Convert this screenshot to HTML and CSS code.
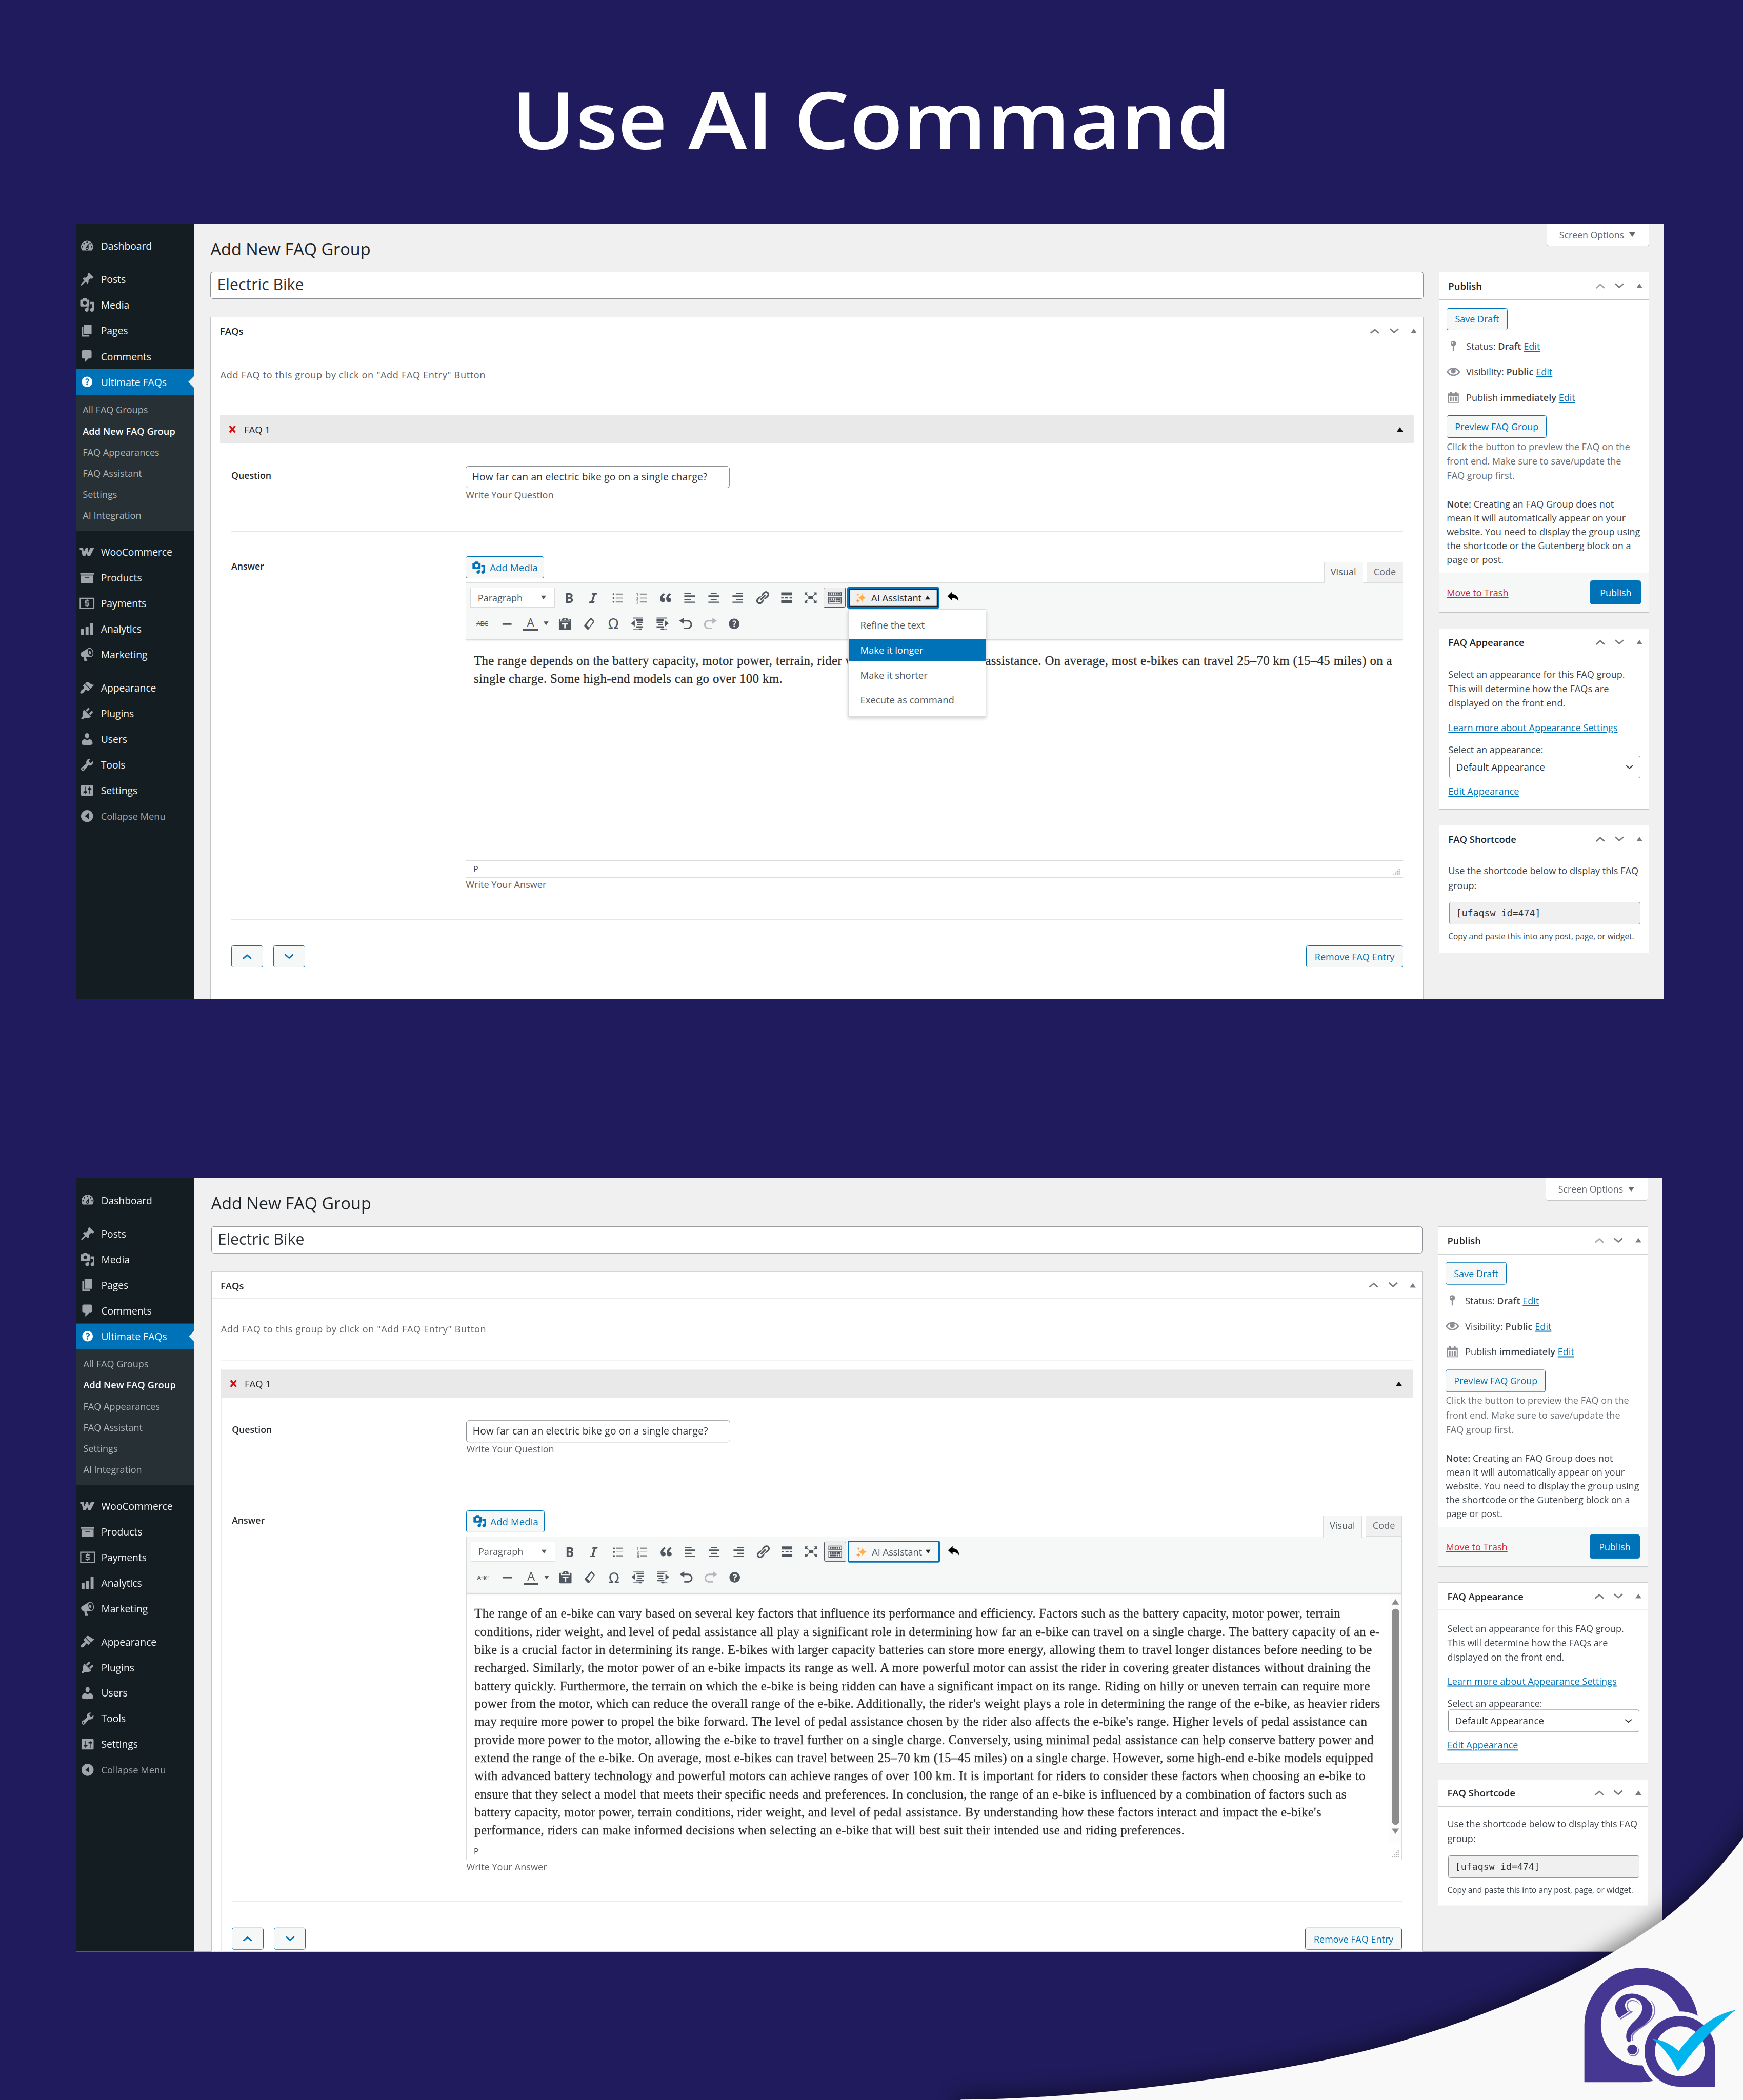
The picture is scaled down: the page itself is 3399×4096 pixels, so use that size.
FILE: index.html
```html
<!DOCTYPE html>
<html lang="en">
<head>
<meta charset="utf-8">
<title>Use AI Command</title>
<link rel="stylesheet" href="styles.css">
</head>
<body>
<svg class="sprite" aria-hidden="true">
  <symbol id="dashboard" viewBox="0 0 20 20"><path d="M3.76 16h12.48c1.1-1.37 1.76-3.11 1.76-5 0-4.42-3.58-8-8-8s-8 3.58-8 8c0 1.89.66 3.63 1.76 5zM10 4c.55 0 1 .45 1 1s-.45 1-1 1-1-.45-1-1 .45-1 1-1zM6 6c.55 0 1 .45 1 1s-.45 1-1 1-1-.45-1-1 .45-1 1-1zm8 0c.55 0 1 .45 1 1s-.45 1-1 1-1-.45-1-1 .45-1 1-1zm-5.37 5.55L12 7v6c0 1.1-.9 2-2 2s-2-.9-2-2c0-.57.24-1.08.63-1.45zM4 10c.55 0 1 .45 1 1s-.45 1-1 1-1-.45-1-1 .45-1 1-1zm12 0c.55 0 1 .45 1 1s-.45 1-1 1-1-.45-1-1 .45-1 1-1zm-5 3c0-.55-.45-1-1-1s-1 .45-1 1 .45 1 1 1 1-.45 1-1z"/></symbol>
  <symbol id="post" viewBox="0 0 20 20"><path d="M10.44 3.02l1.82-1.82 6.36 6.35-1.83 1.82c-1.05-.68-2.48-.57-3.41.36l-.75.75c-.92.93-1.04 2.35-.35 3.41l-1.83 1.82-2.41-2.41-2.8 2.79c-.42.42-3.38 2.71-3.8 2.29s1.86-3.39 2.28-3.81l2.79-2.79L4.1 9.36l1.83-1.82c1.05.69 2.48.57 3.4-.36l.75-.75c.93-.92 1.05-2.35.36-3.41z"/></symbol>
  <symbol id="media" viewBox="0 0 20 20"><path d="M13 11V4c0-.55-.45-1-1-1h-1.67L9 1H5L3.67 3H2c-.55 0-1 .45-1 1v7c0 .55.45 1 1 1h10c.55 0 1-.45 1-1zM7 4.5c1.38 0 2.5 1.12 2.5 2.5S8.38 9.5 7 9.5 4.500 8.38 4.500 7 5.620 4.500 7 4.500zM14 6h5v10.500c0 1.380-1.120 2.500-2.500 2.500S14 17.880 14 16.500s1.120-2.500 2.500-2.500c.17 0 .34.02.5.05V9h-3V6zm-4 8.050V13h2v3.500c0 1.380-1.120 2.500-2.500 2.500S7 17.880 7 16.500 8.120 14 9.500 14c.17 0 .34.02.5.05z"/></symbol>
  <symbol id="page" viewBox="0 0 20 20"><path d="M6 15V2h10v13H6zm-1 1h8v2H3V5h2v11z"/></symbol>
  <symbol id="comments" viewBox="0 0 20 20"><path d="M5 2h9c1.1 0 2 .9 2 2v7c0 1.1-.9 2-2 2h-2l-5 5v-5H5c-1.1 0-2-.9-2-2V4c0-1.1.9-2 2-2z"/></symbol>
  <symbol id="help" viewBox="0 0 20 20"><path d="M17 10c0-3.87-3.14-7-7-7-3.87 0-7 3.13-7 7s3.13 7 7 7c3.86 0 7-3.13 7-7zm-6.3 1.480H9.140v-.43c0-.38.08-.7.24-.98s.46-.57.88-.89c.41-.29.68-.53.81-.71.14-.18.2-.39.2-.62 0-.25-.09-.44-.28-.58-.19-.13-.45-.19-.79-.19-.58 0-1.250.19-2 .57l-.64-1.280c.87-.49 1.800-.74 2.770-.74.81 0 1.450.2 1.920.58.48.39.71.91.71 1.550 0 .43-.09.8-.29 1.110-.19.32-.57.67-1.110 1.060-.38.28-.61.49-.71.63-.1.15-.15.34-.15.57v.35zm-1.470 2.740c-.18-.17-.27-.42-.27-.73 0-.33.08-.58.26-.75s.43-.25.77-.25c.32 0 .57.09.75.26s.27.42.27.74c0 .3-.09.55-.27.72-.18.18-.43.27-.75.27-.33 0-.58-.09-.76-.26z"/></symbol>
  <symbol id="woo" viewBox="0 0 20 20"><path d="M.3 4.700h4.500l.7 5.400 2.700-5.400h2.700l.7 5.400 2.700-5.400h5l-5.300 10.800h-3.200l-1.200-4.200-2.200 4.200H4.200L2.400 7.100H.3z"/></symbol>
  <symbol id="archive" viewBox="0 0 20 20"><path d="M19 4v2H1V4h18zM2 7h16v10H2V7zm11 3V9H7v1h6z"/></symbol>
  <symbol id="payments" viewBox="0 0 20 20"><path fill-rule="evenodd" d="M.2 2.500h19.600v15H.2zM1.700 4v12h16.600V4z"/><path d="M9.300 5h1.500v1.200h1.900v1.500H9.200v1.500h3.500v4.200h-1.900v1.300H9.300v-1.300H7.300v-1.500h3.900v-1.300H7.400V6.200h1.900z"/></symbol>
  <symbol id="chart" viewBox="0 0 20 20"><path d="M18 18V2h-4v16h4zm-6 0V7H8v11h4zm-6 0v-8H2v8h4z"/></symbol>
  <symbol id="megaphone" viewBox="0 0 20 20"><path d="M18.150 5.940c.46 1.620.38 3.220-.02 4.480-.42 1.280-1.260 2.180-2.300 2.480-.16.06-.26.06-.4.06-.06.02-.12.02-.18.02-.06.02-.14.02-.22.02h-6.800l2.220 5.500c.02.14-.06.26-.14.34-.08.1-.24.16-.34.16H6.950c-.1 0-.26-.06-.34-.16-.08-.08-.16-.2-.14-.34l-1-5.500H4.250l-.02-.02c-.5.06-1.080-.18-1.540-.62s-.88-1.080-1.060-1.880c-.24-.8-.2-1.560-.02-2.200.18-.62.58-1.080 1.060-1.300l.02-.02 9-5.400c.1-.06.18-.1.24-.16.06-.04.14-.08.24-.12.16-.08.28-.12.5-.18 1.040-.3 2.240.1 3.220.98s1.840 2.240 2.260 3.860zm-2.580 5.980h-.02c.4-.1.74-.34 1.040-.7.58-.7.86-1.760.86-3.040 0-.64-.1-1.300-.28-1.980-.34-1.360-1.020-2.500-1.780-3.240s-1.680-1.100-2.460-.88c-.82.22-1.400.96-1.700 2-.32 1.040-.28 2.360.06 3.720.38 1.360 1 2.500 1.800 3.240.78.74 1.620 1.100 2.480.88zm-2.540-7.080c.22-.04.42-.02.62.04.38.16.76.48 1.020 1s.42 1.200.42 1.780c0 .3-.04.56-.12.8-.18.48-.44.84-.86.94-.34.1-.8-.06-1.140-.4s-.64-.86-.78-1.500c-.18-.62-.12-1.240.02-1.720s.48-.84.82-.94z"/></symbol>
  <symbol id="appearance" viewBox="0 0 20 20"><path d="M14.480 11.060L7.410 3.990l1.500-1.500c.5-.56 2.300-.47 3.510.32 1.210.8 1.430 1.280 2.910 2.100 1.180.64 2.450 1.260 4.450.85zm-.71.71L6.700 4.700 4.930 6.470c-.39.39-.39 1.020 0 1.410l1.060 1.060c.39.39.39 1.030 0 1.420-.6.6-1.430 1.110-2.210 1.690-.35.26-.7.53-1.010.84C1.430 14.230.4 16.080 1.400 17.070c.99 1 2.840-.03 4.180-1.360.31-.31.58-.66.85-1.020.57-.78 1.080-1.610 1.690-2.210.39-.39 1.020-.39 1.410 0l1.060 1.060c.39.39 1.020.39 1.410 0z"/></symbol>
  <symbol id="plugins" viewBox="0 0 20 20"><path d="M13.110 4.360L9.870 7.600 8 5.730l3.240-3.240c.35-.34 1.050-.2 1.560.32.52.51.66 1.210.31 1.550zm-8 1.770l.91-1.120 9.010 9.010-1.190.84c-.71.71-2.630 1.160-3.820 1.160H6.140L4.900 17.260c-.59.59-1.540.59-2.120 0-.59-.58-.59-1.530 0-2.120l1.240-1.240v-3.880c0-1.130.4-3.190 1.090-3.890zm7.260 3.970l3.240-3.240c.34-.35 1.040-.21 1.550.31.52.51.66 1.210.31 1.550l-3.240 3.250z"/></symbol>
  <symbol id="users" viewBox="0 0 20 20"><path d="M10 9.250c-2.270 0-2.730-3.440-2.730-3.440C7 4.020 7.820 2 9.970 2c2.160 0 2.980 2.020 2.710 3.810 0 0-.41 3.440-2.680 3.440zm0 2.570L12.720 10c2.390 0 4.520 2.330 4.520 4.530v2.490s-3.650 1.130-7.240 1.130c-3.650 0-7.240-1.130-7.240-1.130v-2.490c0-2.250 1.940-4.480 4.470-4.480z"/></symbol>
  <symbol id="tools" viewBox="0 0 20 20"><path d="M16.680 9.770c-1.340 1.340-3.300 1.670-4.950.99l-5.410 6.520c-.99.99-2.590.99-3.580 0s-.99-2.590 0-3.570l6.520-5.420c-.68-1.650-.35-3.610.99-4.950 1.280-1.280 3.120-1.620 4.720-1.060l-2.890 2.890 2.820 2.820 2.860-2.870c.53 1.580.18 3.390-1.080 4.650zM3.810 16.210c.4.39 1.040.39 1.430 0 .4-.4.4-1.040 0-1.430-.39-.4-1.030-.4-1.430 0-.39.39-.39 1.030 0 1.430z"/></symbol>
  <symbol id="settings" viewBox="0 0 20 20"><path d="M18 16V4c0-.55-.45-1-1-1H3c-.55 0-1 .45-1 1v12c0 .55.45 1 1 1h14c.55 0 1-.45 1-1zM8 11h1c.55 0 1 .45 1 1s-.45 1-1 1H8v1.500c0 .28-.22.5-.5.5s-.5-.22-.5-.5V13H6c-.55 0-1-.45-1-1s.45-1 1-1h1V5.500c0-.28.22-.5.5-.5s.5.22.5.5V11zm5-2h-1c-.55 0-1-.45-1-1s.45-1 1-1h1V5.500c0-.28.22-.5.5-.5s.5.22.5.5V7h1c.55 0 1 .45 1 1s-.45 1-1 1h-1v5.500c0 .28-.22.5-.5.5s-.5-.22-.5-.5V9z"/></symbol>
  <symbol id="collapse" viewBox="0 0 20 20"><path fill-rule="evenodd" d="M10 2a8 8 0 1 0 0 16 8 8 0 0 0 0-16zm2.200 4v8L7 10z"/></symbol>
  <symbol id="bold" viewBox="0 0 20 20"><path d="M6 4v13h4.540c1.370 0 2.460-.33 3.260-1 .8-.66 1.200-1.580 1.200-2.770 0-.84-.17-1.510-.51-2.010s-.9-.85-1.670-1.030v-.09c.57-.1 1.020-.4 1.360-.9s.51-1.130.51-1.910c0-1.140-.39-1.980-1.170-2.500C12.750 4.260 11.500 4 9.780 4H6zm2.570 5.150V6.260h1.360c.73 0 1.270.11 1.610.32.34.22.51.58.51 1.070 0 .54-.16.92-.47 1.150s-.82.35-1.510.35h-1.500zm0 2.190h1.600c1.440 0 2.160.53 2.160 1.610 0 .6-.17 1.050-.51 1.340s-.86.43-1.570.43H8.570v-3.380z"/></symbol>
  <symbol id="italic" viewBox="0 0 20 20"><path d="M14.780 6h-2.130l-2.800 9h2.120l-.62 2H4.600l.62-2h2.140l2.800-9H8.030l.62-2h6.750z"/></symbol>
  <symbol id="ul" viewBox="0 0 20 20"><path opacity=".6" d="M8 4.500h9v2H8zM8 14.500h9v2H8z"/><path d="M8 10h9v1H8z"/><circle cx="5" cy="5.500" r="1.200"/><circle cx="5" cy="10.500" r="1.200"/><circle cx="5" cy="15.500" r="1.200"/></symbol>
  <symbol id="ol" viewBox="0 0 20 20"><path opacity=".6" d="M8 4.500h9v2H8zM8 14.500h9v2H8z"/><path d="M8 10h9v1H8z"/><path opacity=".65" d="M4.200 3.500h1.100v4H4.200zM3.400 4.200h1v.8h-1zM3.500 9h2.600v2L4.800 12h1.300v.8H3.500v-1l1.500-1.400v-.6H3.500zM3.500 14h2.600v4H3.500v-.8h1.600v-.8H4v-.8h1.100v-.8H3.500z"/></symbol>
  <symbol id="quote" viewBox="0 0 20 20"><path d="M9.490 13.220c0-.74-.2-1.380-.61-1.900-.62-.78-1.830-.88-2.530-.72-.29-1.650 1.110-3.750 2.920-4.650L7.880 4c-2.730 1.300-5.420 4.280-4.960 8.050C3.210 14.430 4.590 16 6.540 16c.85 0 1.560-.25 2.120-.75s.83-1.180.83-2.030zm8.050 0c0-.74-.2-1.380-.61-1.900-.63-.78-1.830-.88-2.530-.72-.29-1.650 1.110-3.750 2.920-4.650L15.930 4c-2.730 1.300-5.410 4.280-4.950 8.050.29 2.380 1.660 3.950 3.610 3.950.85 0 1.560-.25 2.120-.75s.83-1.180.83-2.030z"/></symbol>
  <symbol id="left" viewBox="0 0 20 20"><path d="M3 3.500h9v1.600H3zM3 7h14v2H3zM3 11.500h9v2H3zM3 15.200h14v1.600H3z"/></symbol>
  <symbol id="center" viewBox="0 0 20 20"><path d="M6 3.500h8v1.600H6zM3 7h14v2H3zM6 11.500h8v2H6zM3 15.200h14v1.600H3z"/></symbol>
  <symbol id="right" viewBox="0 0 20 20"><path d="M8 3.500h9v1.600H8zM3 7h14v2H3zM8 11.500h9v2H8zM3 15.200h14v1.600H3z"/></symbol>
  <symbol id="link" viewBox="0 0 20 20"><path d="M17.740 2.760c1.680 1.690 1.680 4.410 0 6.100l-1.530 1.520c-1.120 1.120-2.700 1.470-4.140 1.090l2.620-2.610.76-.77.76-.76c.84-.84.84-2.200 0-3.040-.84-.85-2.200-.85-3.040 0l-.77.76-3.380 3.380c-.37-1.440-.02-3.020 1.100-4.140l1.520-1.530c1.690-1.680 4.420-1.680 6.100 0zM8.590 13.430l5.340-5.340c.42-.42.42-1.100 0-1.520-.44-.43-1.130-.39-1.530 0l-5.330 5.340c-.42.42-.42 1.100 0 1.520.44.43 1.130.39 1.520 0zm-.76 2.290l4.140-4.150c.38 1.440.03 3.020-1.090 4.140l-1.520 1.530c-1.690 1.680-4.410 1.680-6.100 0-1.680-1.680-1.680-4.420 0-6.100l1.530-1.520c1.120-1.120 2.700-1.470 4.140-1.100l-4.140 4.150c-.85.84-.85 2.200 0 3.050.84.84 2.200.84 3.040 0z"/></symbol>
  <symbol id="more" viewBox="0 0 20 20"><path d="M17 7V3H3v4h14zM6 11V9H3v2h3zm6 0V9H8v2h4zm5 0V9h-3v2h3zm0 6v-4H3v4h14z"/></symbol>
  <symbol id="expand" viewBox="0 0 20 20"><path d="M7 8h6v4H7zm-5 5v4h4l-1.200-1.200L7 12l-3.800 2.200M14 17h4v-4l-1.200 1.200L13 12l2.200 3.800M14 3l1.300 1.300L13 8l3.800-2.200L18 7V3M6 3H2v4l1.200-1.200L7 8 4.700 4.300"/></symbol>
  <symbol id="sink" viewBox="0 0 20 20"><path d="M19 2v6H1V2h18zm-1 5V3H2v4h16zM5 4v2H3V4h2zm3 0v2H6V4h2zm3 0v2H9V4h2zm3 0v2h-2V4h2zm3 0v2h-2V4h2zm2 5v9H1V9h18zm-1 8v-7H2v7h16zM5 11v2H3v-2h2zm3 0v2H6v-2h2zm3 0v2H9v-2h2zm6 0v2h-5v-2h5zm-6 3v2H3v-2h8zm3 0v2h-2v-2h2zm3 0v2h-2v-2h2z"/></symbol>
  <symbol id="sparkle" viewBox="0 0 20 20"><path fill="#ffb04a" d="M12 2c1 5 2.200 7 7.500 8.500-5.300 1.500-6.500 3.500-7.500 8.500-1-5-2.200-7-7.500-8.500C9.800 9 11 7 12 2z"/><path fill="#ff9563" d="M4.500 11.800c.5 2.300 1.100 3.400 3.800 4.200-2.700.8-3.300 1.900-3.800 4.200-.5-2.300-1.100-3.400-3.800-4.200 2.700-.8 3.300-1.900 3.800-4.200z"/><path fill="#ffb861" d="M4.800 1.500c.4 2 1 2.800 3 3.400-2 .6-2.600 1.400-3 3.400-.4-2-1-2.800-3-3.400 2-.6 2.600-1.400 3-3.400z"/></symbol>
  <symbol id="reply" viewBox="0 0 20 20"><path d="M8.500 2.500v3.800c6.500.1 9.800 4.200 9.800 10.700-2.200-3.600-4.800-4.900-9.800-4.900v4L1.500 9.300z"/></symbol>
  <symbol id="hline" viewBox="0 0 20 20"><path d="M4 9h12v2.400H4z"/></symbol>
  <symbol id="paste" viewBox="0 0 20 20"><path d="M12.380 2L15 5v1H5V5l2.640-3h4.740zM10 5c.55 0 1-.44 1-1 0-.55-.45-1-1-1s-1 .45-1 1c0 .56.45 1 1 1zm5.450-1H17c.55 0 1 .45 1 1v12c0 .56-.45 1-1 1H3c-.55 0-1-.44-1-1V5c0-.55.45-1 1-1h1.550L4 4.630V7h12V4.630zM14 11V9H6v2h3v5h2v-5h3z"/></symbol>
  <symbol id="eraser" viewBox="0 0 20 20"><path fill-rule="evenodd" d="M11.600 2.600c.5-.6 1.300-.6 1.800 0l3 3.400c.5.6.5 1.400.1 2L9.800 17c-.7.9-1.700.9-2.400.1L4 13.600c-.6-.7-.6-1.500-.1-2.200zM12.500 4L6.600 11.500l3.400 3.600L15.300 7z"/></symbol>
  <symbol id="outdent" viewBox="0 0 20 20"><path opacity=".6" d="M3.500 1.600H17v1.600H3.500zM3.500 16.400H12v1.300H3.500z"/><path d="M7.500 4H17v2.200H7.500zM9 7.200h8v2H9zM9 10.300h6v2H9zM7.500 13.300H17v2H7.500zM11.500 16.200h3.500v1.800h-3.500zM6 5.500v8L1 9.500z"/></symbol>
  <symbol id="indent" viewBox="0 0 20 20"><path opacity=".6" d="M3 1.600h13.500v1.600H3zM8 16.400h8.500v1.300H8z"/><path d="M3 4h9.500v2.200H3zM3 7.200h8v2H3zM5 10.300h6v2H5zM3 13.300h9.500v2H3zM9 16.200h3.500v1.800H9zM14 5.500v8l5-4z"/></symbol>
  <symbol id="undo" viewBox="0 0 20 20"><path d="M12 5H7V2L1 6l6 4V7h5c2.200 0 4 1.800 4 4s-1.800 4-4 4H7v2h5c3.300 0 6-2.700 6-6s-2.700-6-6-6z"/></symbol>
  <symbol id="redo" viewBox="0 0 20 20"><path d="M8 5h5V2l6 4-6 4V7H8c-2.200 0-4 1.800-4 4s1.800 4 4 4h5v2H8c-3.300 0-6-2.700-6-6s2.700-6 6-6z"/></symbol>
  <symbol id="pin" viewBox="0 0 20 20"><path d="M14 6c0 1.860-1.280 3.410-3 3.860V16c0 1-2 2-2 2V9.860c-1.720-.45-3-2-3-3.860 0-2.210 1.790-4 4-4s4 1.790 4 4zM8 5c0 .55.45 1 1 1s1-.45 1-1-.45-1-1-1-1 .45-1 1z"/></symbol>
  <symbol id="eye" viewBox="0 0 20 20"><path d="M19.700 9.400C17.700 6 14 3.900 10 3.900S2.300 6 .3 9.400L0 10l.3.6c2 3.400 5.700 5.500 9.700 5.500s7.700-2.100 9.700-5.500l.3-.6zM10 14.100c-3.100 0-6-1.600-7.700-4.100C3.600 8 5.700 6.600 8 6.100c-.9.6-1.500 1.700-1.500 2.900 0 1.900 1.600 3.500 3.500 3.500s3.500-1.600 3.500-3.500c0-1.200-.6-2.300-1.500-2.900 2.300.5 4.400 1.900 5.700 3.900-1.700 2.500-4.600 4.100-7.700 4.100z"/><circle cx="10" cy="9" r="2.600"/></symbol>
  <symbol id="calendar" viewBox="0 0 20 20"><path fill-rule="evenodd" d="M15 4h3v14H2V4h3V3c0-.83.67-1.500 1.500-1.500S8 2.170 8 3v1h4V3c0-.83.67-1.500 1.500-1.500S15 2.170 15 3v1zM3.500 8v8.700h13V8zM5 8.800h2.300v7H5zM8.900 8.800h2.300v7H8.900zM12.700 8.800H15v7h-2.300z"/></symbol>
  <symbol id="up" viewBox="0 0 28 16"><path d="M2.500 14L14 4l11.500 10" fill="none" stroke="currentColor" stroke-width="4"/></symbol>
  <symbol id="down" viewBox="0 0 28 16"><path d="M2.500 2L14 12 25.500 2" fill="none" stroke="currentColor" stroke-width="4"/></symbol>
  <symbol id="tri-up" viewBox="0 0 16 12"><path d="M8 0l8 12H0z"/></symbol>
  <symbol id="tri-down" viewBox="0 0 16 12"><path d="M8 12L0 0h16z"/></symbol>
  <symbol id="grip" viewBox="0 0 18 18"><path d="M14 0h3v3h-3zM14 5h3v3h-3zM9 5h3v3H9zM14 10h3v3h-3zM9 10h3v3H9zM4 10h3v3H4zM14 15h3v3h-3zM9 15h3v3H9zM4 15h3v3H4zM0 15h2v3H0z"/></symbol>
</svg>

<header class="banner">
  <svg viewBox="0 0 4500 577" role="img" aria-label="Use AI Command">
    <g class="banner-title">
      <text x="1321" y="385" textLength="402" lengthAdjust="spacingAndGlyphs">Use</text>
      <text x="1777" y="385" textLength="221" lengthAdjust="spacingAndGlyphs">AI</text>
      <text x="2050" y="385" textLength="1129" lengthAdjust="spacingAndGlyphs">Command</text>
    </g>
  </svg>
</header>

<section class="panel">
  <nav class="menu">
    <a class="item"><svg><use href="#dashboard"/></svg>Dashboard</a>
    <a class="item gap"><svg><use href="#post"/></svg>Posts</a>
    <a class="item"><svg><use href="#media"/></svg>Media</a>
    <a class="item"><svg><use href="#page"/></svg>Pages</a>
    <a class="item"><svg><use href="#comments"/></svg>Comments</a>
    <a class="item current"><svg><use href="#help"/></svg>Ultimate FAQs</a>
    <div class="submenu">
      <a>All FAQ Groups</a><a class="active">Add New FAQ Group</a><a>FAQ Appearances</a><a>FAQ Assistant</a><a>Settings</a><a>AI Integration</a>
    </div>
    <a class="item gap"><svg><use href="#woo"/></svg>WooCommerce</a>
    <a class="item"><svg><use href="#archive"/></svg>Products</a>
    <a class="item"><svg><use href="#payments"/></svg>Payments</a>
    <a class="item"><svg><use href="#chart"/></svg>Analytics</a>
    <a class="item"><svg><use href="#megaphone"/></svg>Marketing</a>
    <a class="item gap"><svg><use href="#appearance"/></svg>Appearance</a>
    <a class="item"><svg><use href="#plugins"/></svg>Plugins</a>
    <a class="item"><svg><use href="#users"/></svg>Users</a>
    <a class="item"><svg><use href="#tools"/></svg>Tools</a>
    <a class="item"><svg><use href="#settings"/></svg>Settings</a>
    <a class="item collapse"><svg><use href="#collapse"/></svg>Collapse Menu</a>
  </nav>

  <main class="content">
    <div class="top">
      <h1>Add New FAQ Group</h1>
      <div class="screen-options">Screen Options <svg class="tri"><use href="#tri-down"/></svg></div>
    </div>
    <div class="columns">
      <div class="primary">
        <div class="title-input">Electric Bike</div>
        <div class="box faqs">
          <div class="box-head"><h2>FAQs</h2><svg class="chev"><use href="#up"/></svg><svg class="chev"><use href="#down"/></svg><svg class="tri"><use href="#tri-up"/></svg></div>
          <div class="faqs-body">
            <p class="intro">Add FAQ to this group by click on "Add FAQ Entry" Button</p>
            <div class="entry">
              <div class="entry-head"><svg class="cross" viewBox="0 0 16 16"><path d="M2 1l12 14M14 1L2 15"/></svg><span>FAQ 1</span><svg class="tri"><use href="#tri-up"/></svg></div>
              <div class="entry-body">
                <div class="field question">
                  <label>Question</label>
                  <div class="control"><div class="text-input">How far can an electric bike go on a single charge?</div><p class="hint">Write Your Question</p></div>
                </div>
                <div class="field answer">
                  <label>Answer</label>
                  <div class="control">
                    <div class="media-row"><button class="btn add-media"><svg><use href="#media"/></svg>Add Media</button><div class="tabs"><span class="tab on">Visual</span><span class="tab">Code</span></div></div>
                    <div class="editor">
                      <div class="toolbar">
                        <div class="tools">
                          <div class="format">Paragraph<svg class="tri"><use href="#tri-down"/></svg></div>
                          <i><svg><use href="#bold"/></svg></i><i><svg><use href="#italic"/></svg></i><i><svg><use href="#ul"/></svg></i><i><svg><use href="#ol"/></svg></i><i><svg><use href="#quote"/></svg></i><i><svg><use href="#left"/></svg></i><i><svg><use href="#center"/></svg></i><i><svg><use href="#right"/></svg></i><i><svg><use href="#link"/></svg></i><i><svg><use href="#more"/></svg></i><i><svg><use href="#expand"/></svg></i><i class="pressed"><svg><use href="#sink"/></svg></i>
                          <div class="ai open"><svg class="spark"><use href="#sparkle"/></svg><span>AI Assistant</span><svg class="tri"><use href="#tri-up"/></svg>
                            <div class="dropdown"><span>Refine the text</span><span class="hover">Make it longer</span><span>Make it shorter</span><span>Execute as command</span></div>
                          </div>
                          <svg class="reply"><use href="#reply"/></svg>
                        </div>
                        <div class="tools second">
                          <i class="abc">ABC</i><i><svg><use href="#hline"/></svg></i><i class="color"><span>A</span></i><i class="caret"><svg class="tri"><use href="#tri-down"/></svg></i><i><svg><use href="#paste"/></svg></i><i><svg><use href="#eraser"/></svg></i><i class="omega">Ω</i><i><svg><use href="#outdent"/></svg></i><i><svg><use href="#indent"/></svg></i><i><svg><use href="#undo"/></svg></i><i class="off"><svg><use href="#redo"/></svg></i><i><svg><use href="#help"/></svg></i>
                        </div>
                      </div>
                      <div class="text"><p>The range depends on the battery capacity, motor power, terrain, rider weight, and level of pedal assistance. On average, most e-bikes can travel 25–70 km (15–45 miles) on a<br>single charge. Some high-end models can go over 100 km.</p></div>
                      <div class="status"><span>P</span><svg class="grip"><use href="#grip"/></svg></div>
                    </div>
                    <p class="hint">Write Your Answer</p>
                  </div>
                </div>
                <div class="entry-foot"><button class="btn move"><svg class="chev"><use href="#up"/></svg></button><button class="btn move"><svg class="chev"><use href="#down"/></svg></button><button class="btn remove">Remove FAQ Entry</button></div>
              </div>
            </div>
          </div>
        </div>
      </div>

      <aside class="side">
        <div class="box publish">
          <div class="box-head"><h2>Publish</h2><svg class="chev dim"><use href="#up"/></svg><svg class="chev"><use href="#down"/></svg><svg class="tri"><use href="#tri-up"/></svg></div>
          <div class="publish-body">
            <button class="btn save">Save Draft</button>
            <p class="meta"><svg><use href="#pin"/></svg><span>Status: <b>Draft</b> <a>Edit</a></span></p>
            <p class="meta"><svg><use href="#eye"/></svg><span>Visibility: <b>Public</b> <a>Edit</a></span></p>
            <p class="meta"><svg><use href="#calendar"/></svg><span>Publish <b>immediately</b> <a>Edit</a></span></p>
            <button class="btn preview">Preview FAQ Group</button>
            <p class="preview-note">Click the button to preview the FAQ on the<br>front end. Make sure to save/update the<br>FAQ group first.</p>
            <p class="note"><b>Note:</b> Creating an FAQ Group does not<br>mean it will automatically appear on your<br>website. You need to display the group using<br>the shortcode or the Gutenberg block on a<br>page or post.</p>
          </div>
          <div class="publish-foot"><a class="trash">Move to Trash</a><button class="btn primary-btn">Publish</button></div>
        </div>
        <div class="box look">
          <div class="box-head"><h2>FAQ Appearance</h2><svg class="chev"><use href="#up"/></svg><svg class="chev"><use href="#down"/></svg><svg class="tri"><use href="#tri-up"/></svg></div>
          <div class="side-body">
            <p>Select an appearance for this FAQ group.<br>This will determine how the FAQs are<br>displayed on the front end.</p>
            <p class="learn"><a>Learn more about Appearance Settings</a></p>
            <p class="pick">Select an appearance:</p>
            <div class="select"><span>Default Appearance</span><svg class="chev"><use href="#down"/></svg></div>
            <p class="edit"><a>Edit Appearance</a></p>
          </div>
        </div>
        <div class="box short">
          <div class="box-head"><h2>FAQ Shortcode</h2><svg class="chev"><use href="#up"/></svg><svg class="chev"><use href="#down"/></svg><svg class="tri"><use href="#tri-up"/></svg></div>
          <div class="side-body">
            <p>Use the shortcode below to display this FAQ<br>group:</p>
            <div class="code">[ufaqsw id=474]</div>
            <p class="copy">Copy and paste this into any post, page, or widget.</p>
          </div>
        </div>
      </aside>
    </div>
  </main>
</section>

<template id="long-answer">
  <div class="text long">
    <p>The range of an e-bike can vary based on several key factors that influence its performance and efficiency. Factors such as the battery capacity, motor power, terrain<br>conditions, rider weight, and level of pedal assistance all play a significant role in determining how far an e-bike can travel on a single charge. The battery capacity of an e-<br>bike is a crucial factor in determining its range. E-bikes with larger capacity batteries can store more energy, allowing them to travel longer distances before needing to be<br>recharged. Similarly, the motor power of an e-bike impacts its range as well. A more powerful motor can assist the rider in covering greater distances without draining the<br>battery quickly. Furthermore, the terrain on which the e-bike is being ridden can have a significant impact on its range. Riding on hilly or uneven terrain can require more<br>power from the motor, which can reduce the overall range of the e-bike. Additionally, the rider's weight plays a role in determining the range of the e-bike, as heavier riders<br>may require more power to propel the bike forward. The level of pedal assistance chosen by the rider also affects the e-bike's range. Higher levels of pedal assistance can<br>provide more power to the motor, allowing the e-bike to travel further on a single charge. Conversely, using minimal pedal assistance can help conserve battery power and<br>extend the range of the e-bike. On average, most e-bikes can travel between 25–70 km (15–45 miles) on a single charge. However, some high-end e-bike models equipped<br>with advanced battery technology and powerful motors can achieve ranges of over 100 km. It is important for riders to consider these factors when choosing an e-bike to<br>ensure that they select a model that meets their specific needs and preferences. In conclusion, the range of an e-bike is influenced by a combination of factors such as<br>battery capacity, motor power, terrain conditions, rider weight, and level of pedal assistance. By understanding how these factors interact and impact the e-bike's<br>performance, riders can make informed decisions when selecting an e-bike that will best suit their intended use and riding preferences.</p>
    <div class="scrollbar"><svg class="tri"><use href="#tri-up"/></svg><div class="thumb"></div><svg class="tri"><use href="#tri-down"/></svg></div>
  </div>
</template>

<svg class="corner" viewBox="2400 4622 2100 801" aria-hidden="true">
  <path class="swoosh" d="M2480 5422C2800 5421 3250 5362 3500 5302C3690 5256 3860 5194 4019 5119C4115 5074 4210 5017 4292 4959C4370 4899 4445 4822 4500 4745L4620 4560V5600H2480z"/>
</svg>
<svg class="logo" viewBox="0 0 1320 1116" role="img" aria-label="Ultimate FAQ">
  <path class="p" d="M90 982V539A442 442 0 0 1 974 539A442 442 0 0 1 532 982z"/>
  <circle class="w" cx="531" cy="539" r="313"/>
  <circle class="w" cx="830" cy="743" r="309"/>
  <path class="p" d="M1104 1017V743A274 274 0 1 0 830 1017z"/>
  <circle class="w" cx="830" cy="743" r="193.500"/>
  <path class="p" d="M360 486C320 440 322 375 350 345C390 290 470 288 520 308C580 332 618 370 618 422C618 560 449 560 449 640C452 662 446 672 435 672C422 670 414 650 414 630C414 520 538 500 538 405C536 355 500 333 465 333C430 334 404 356 405 390C407 412 418 426 432 435z"/>
  <circle class="p" cx="461" cy="729" r="39"/>
  <path class="l" d="M522 384C505 348 475 344 452 346C425 350 415 370 417 395C420 418 432 430 443 437L367 490L372 497L469 436L452 431C436 423 427 405 428 385C430 362 445 354 465 354C490 354 508 366 522 384zM602 348C625 378 630 400 630 430C628 540 455 560 455 632C456 650 460 662 468 670C462 650 464 634 470 620C500 560 640 530 640 425C638 390 625 365 602 348zM498 700C520 735 498 772 466 774C450 775 440 770 433 763C440 776 452 783 468 783C510 780 528 735 498 700z"/>
  <path class="c" d="M618 645C700 655 762 688 821 741C930 590 1080 460 1260 423C1100 555 960 695 815 899C770 800 700 710 618 645z"/>
</svg>
<script src="panels.js"></script>
</body>
</html>
```

FILE: panels.js
```js
// The second panel is the same screen after the command has run:
// the menu is closed and the editor holds the expanded answer.
const before = document.querySelector('.panel');
const after = before.cloneNode(true);
after.classList.add('after');
after.querySelector('.ai').classList.remove('open');
after.querySelector('.dropdown').remove();
after.querySelector('.ai .tri use').setAttribute('href', '#tri-down');
after.querySelector('.editor .text').replaceWith(
  document.getElementById('long-answer').content.cloneNode(true)
);
before.after(after);
```

FILE: styles.css
```css
* { box-sizing: border-box; }
html { background: #201b5c; overflow: hidden; }
body {
  zoom: 0.7553;
  position: relative;
  margin: 0;
  width: 4500px;
  height: 5423px;
  overflow: hidden;
  background: #201b5c;
  font-family: "Open Sans", "Noto Sans", sans-serif;
  font-size: 24px;
  color: #3c434a;
}
h1, h2, p { margin: 0; }
svg { fill: currentColor; flex: none; display: block; }
a { color: #0073b8; text-decoration: underline; text-decoration-thickness: 2px; text-underline-offset: 3px; }
b { font-weight: 600; }
i { font-style: normal; }
button { font: inherit; }
.sprite { position: absolute; width: 0; height: 0; }

.banner { height: 577.500px; }
.banner svg { width: 4500px; height: 577px; }
.banner-title { font-weight: 600; font-size: 203px; fill: #fff; }

.panel {
  display: flex;
  width: 4098px;
  height: 2002.500px;
  margin-left: 196.500px;
  overflow: hidden;
  background: #f0f0f0;
  border-bottom: 2px solid #000;
}
.panel.after { width: 4095.500px; margin-top: 463px; transform: scaleY(.9985); transform-origin: top; }

/* admin menu */
.menu { width: 304px; flex: none; padding-top: 24px; background: #141e22; color: #f3f3f3; }
.after .menu { width: 305.500px; }
.after .menu .item { padding-left: 10px; }
.after .menu .submenu { padding-left: 18.500px; }
.item {
  display: flex; align-items: center; gap: 16px;
  height: 66.400px; padding-left: 9px;
  font-size: 25.600px; letter-spacing: -.05px; color: inherit; text-decoration: none;
}
.item svg { width: 39px; height: 39px; color: #a0a5aa; }
.item.gap { margin-top: 20px; }
.item.current { background: #0073b8; color: #fff; position: relative; }
.item.current svg { color: #fff; }
.item.current::after {
  content: ""; position: absolute; right: 0; top: 18px;
  border: 15px solid transparent; border-left: 0; border-right-color: #f0f0f0;
}
.submenu { display: flex; flex-direction: column; height: 352px; padding: 12px 0 0 17px; background: #263035; margin-bottom: 21px; }
.submenu a { height: 54.600px; line-height: 54.600px; font-size: 24px; color: #b0b5b8; text-decoration: none; white-space: nowrap; }
.submenu .active { color: #fff; font-weight: 600; letter-spacing: .15px; }
.submenu + .gap { margin-top: 0; }
.submenu ~ .item { height: 66.150px; }
.item.collapse { color: #a0a5aa; font-size: 24.300px; }

/* page head */
.content { flex: 1; padding: 0 37px 0 43px; display: flex; flex-direction: column; }
.top { display: flex; flex: none; justify-content: space-between; align-items: flex-start; height: 124.300px; }
h1 { font-size: 43px; font-weight: 400; line-height: 60px; margin-top: 35px; color: #1d2327; }
.screen-options {
  display: flex; align-items: center; gap: 13px; width: 264px; height: 58px; padding-left: 31px;
  background: #fff; border: 2px solid #c3c4c7; border-top: 0; border-radius: 0 0 6px 6px;
  color: #646970; font-size: 23.500px;
}
.tri { width: 16px; height: 12px; }
.columns { display: flex; justify-content: space-between; gap: 39.500px; flex: 1; min-height: 0; overflow: hidden; }
.primary { flex: 1; min-width: 0; }
.side { width: 542.500px; flex: none; }

.title-input {
  height: 70px; padding-left: 16px; margin-bottom: 46.500px;
  border: 2.500px solid #8c8f94; border-radius: 7px; background: #fff;
  font-size: 40px; line-height: 64px; color: #2c3338;
}
.box { background: #fff; border: 2.500px solid #c3c4c7; }
.box-head { display: flex; align-items: center; height: 71px; padding: 0 16px 0 23px; border-bottom: 2.500px solid #c3c4c7; color: #787c82; }
.box-head h2 { flex: 1; font-size: 24.500px; font-weight: 600; color: #1d2327; }
.chev { width: 26px; height: 15px; }
.box-head .chev { margin-right: 24px; }
.box-head .chev + .tri { margin-left: 6px; }
.box-head .dim { color: #a7aaad; }

.faqs { height: 1900px; }
.faqs-body { padding: 0 23px 0 24px; }
.intro { height: 158px; line-height: 156px; font-weight: 500; color: #5d6268; border-bottom: 2.500px solid #e6e6e6; letter-spacing: .85px; }
.entry { margin-top: 24px; border: 2.500px solid #e9e9e9; border-top: 0; }
.entry-head { display: flex; align-items: center; height: 73px; margin: 0 -2px; padding: 0 29px 0 23px; background: #e9e9e9; color: #111; }
.entry-head span { flex: 1; margin-left: 20px; font-weight: 500; color: #1d2327; font-size: 24.500px; }
.cross { width: 19px; height: 19px; fill: none; stroke: #d40f0f; stroke-width: 4; }
.entry-body { padding: 0 27px 66px; }
.field { display: flex; border-bottom: 2.500px solid #e6e6e6; }
.field label { width: 605.500px; flex: none; color: #23282d; font-weight: 600; font-size: 23.500px; line-height: 34px; }
.control { flex: 1; min-width: 0; }
.question { height: 227px; padding-top: 58px; }
.question label { margin-top: 8px; }
.answer { padding-top: 64px; padding-bottom: 69px; }
.answer label { margin-top: 9px; }
.text-input {
  width: 681px; height: 57px; padding-left: 15px; border: 2.500px solid #8c8f94; border-radius: 7px;
  font-size: 25.500px; letter-spacing: .25px; line-height: 52px; color: #2c3338; white-space: nowrap;
}
.hint { height: 38px; line-height: 36px; font-size: 24px; color: #5c6268; }
.btn {
  display: flex; align-items: center; justify-content: center; padding: 0; white-space: nowrap;
  border: 2.500px solid #0073b8; border-radius: 6px; background: #f6f7f7; color: #0073b8; font-size: 23.800px;
}
.media-row { display: flex; justify-content: space-between; height: 67.500px; }
.add-media { width: 202px; height: 57.600px; gap: 11px; font-size: 24.800px; }
.add-media svg { width: 35px; height: 35px; }
.tabs { display: flex; gap: 9px; align-self: flex-end; height: 56px; margin-bottom: -2.500px; z-index: 1; }
.tab { width: 95px; height: 54px; line-height: 49px; text-align: center; border: 2.500px solid #dcdcde; background: #f0f0f0; color: #646970; }
.tab.on { width: 101px; height: 56px; background: #f6f7f7; border-bottom: 0; color: #50575e; }

/* editor */
.editor { border: 2.500px solid #dcdcde; background: #fff; }
.toolbar { height: 149px; padding: 12px 0 0 9.500px; background: #f6f7f7; border-bottom: 4px solid #dcdcde; box-shadow: 0 2px 3px rgba(0,0,0,.06); color: #50575e; position: relative; }
.tools { display: flex; align-items: center; height: 52px; }
.tools.second { margin-top: 15px; }
.format {
  display: flex; align-items: center; justify-content: space-between; width: 219px; height: 52px;
  margin-right: 5px; padding: 0 21px 0 19px; border: 2.500px solid #dcdcde; background: #fff; font-size: 23.800px;
}
.format .tri { width: 13px; }
.tools i { width: 56.400px; height: 51px; margin: 0 3px; display: flex; align-items: center; justify-content: center; flex: none; }
.tools i svg { width: 39px; height: 39px; }
.tools .pressed { border: 2.500px solid #50575e; border-radius: 3px; background: #eee; }
.ai {
  display: flex; align-items: center; position: relative; height: 56px; width: 238px; padding-left: 17px; margin: 0 17px 0 1.500px;
  border: 4.500px solid #0073b8; border-radius: 5px; background: #f6f7f7; color: #50575e; font-size: 24.200px;
}
.ai.open { background: #f0f0f0; color: #1d2327; box-shadow: inset 0 0 0 3px #1d2327; }
.ai .spark { width: 29px; height: 33px; margin-right: 12px; }
.ai .tri { width: 13px; margin-left: 9px; color: #1d2327; }
.reply { width: 36px; height: 34px; color: #000; margin-top: -4px; }
.dropdown {
  position: absolute; left: -2px; top: 54px; z-index: 3; width: 357px; height: 277px; padding: 9px 0 0;
  display: flex; flex-direction: column; gap: 1px;
  background: #fff; border: 2.500px solid #dcdcde; box-shadow: 0 5px 9px rgba(0,0,0,.2);
}
.dropdown span { height: 63.500px; line-height: 60px; padding-left: 30px; color: #50575e; font-size: 24.500px; white-space: nowrap; }
.dropdown .hover { background: #0073b8; color: #fff; height: 59px; line-height: 57px; margin: 1px 0 3.500px; }
.tools .abc { font-size: 17px; letter-spacing: -1px; text-decoration: line-through; width: 55px; margin: 0 5px 0 4px; }
.tools .color { margin: 0 0 0 3px; width: 46px; margin-left: 7px; }
.color span { width: 39px; height: 39px; border-bottom: 6px solid #50575e; text-align: center; line-height: 33px; font-size: 31px; }
.tools .caret { width: 34px; margin: 0 2px 0 0; }
.caret + i { margin-left: 2px; }
.tools i .tri { width: 13px; height: 13px; }
.omega { font-family: "DejaVu Sans", sans-serif; font-size: 36px; }
.off { color: #b4b9be; }
.text { height: 568px; padding: 28px 0 0 19.500px; display: flex; justify-content: space-between; }
.text p { font-family: Georgia, "Liberation Serif", serif; font-size: 33px; line-height: 46.800px; letter-spacing: .43px; color: #2e2e2e; -webkit-text-stroke: .4px #2e2e2e; white-space: nowrap; }
.text.long { height: 642px; padding-top: 25px; }
.scrollbar { width: 32px; margin-top: -25px; padding: 12px 0; background: #fcfcfc; color: #8a8a8a; display: flex; flex-direction: column; align-items: center; gap: 9px; }
.scrollbar .tri { width: 19px; height: 15px; }
.thumb { width: 19px; height: 560px; border-radius: 10px; background: #8c8c8c; }
.status { display: flex; justify-content: space-between; align-items: flex-end; height: 43px; padding: 0 6px 5px 18px; border-top: 2.500px solid #dcdcde; }
.status span { font-size: 21px; line-height: 32px; }
.grip { width: 18px; height: 18px; color: #b0b0b0; }
.entry-foot { display: flex; padding-top: 67px; gap: 27px; height: 125px; }
.move { width: 82px; height: 57px; }
.remove { width: 251px; height: 57px; margin-left: auto; }

/* side boxes */
.side .box-head { height: 71px; }
.publish { height: 880px; }
.publish-body { height: 705px; padding: 21px 19px 0; }
.save { width: 157px; height: 58px; margin-bottom: 8px; }
.meta { display: flex; align-items: center; gap: 15px; height: 66px; }
.meta svg { width: 35px; height: 35px; color: #8c8f94; }
.preview { width: 258px; height: 59px; margin-top: 13px; }
.preview-note { color: #6b7076; line-height: 37.500px; margin-top: 3px; }
.note { line-height: 35.800px; margin-top: 38px; white-space: nowrap; }
.publish-foot { display: flex; align-items: center; justify-content: space-between; height: 101px; padding: 0 19px; background: #f6f7f7; border-top: 2.500px solid #dcdcde; }
.trash { color: #d0282e; }
.primary-btn { width: 131px; height: 62px; background: #0073b8; color: #fff; }
.look { height: 468px; margin-top: 41px; }
.short { height: 330px; margin-top: 40px; }
.side-body { padding: 27px 21px 0 23px; line-height: 37.500px; white-space: nowrap; }
.learn { margin-top: 25px; }
.pick { margin-top: 20px; height: 35px; }
.select, .code {
  display: flex; align-items: center; justify-content: space-between; height: 58px; margin-left: 2px; padding: 0 17px;
  border: 2.500px solid #8c8f94; border-radius: 6px; background: #fff; color: #2c3338; font-size: 24.800px;
}
.select .chev { width: 20px; height: 12px; }
.edit { margin-top: 14px; }
.short .side-body { padding-top: 26px; line-height: 38.500px; }
.code { margin-top: 23px; background: #f0f0f0; font-family: "DejaVu Sans Mono", monospace; font-size: 24.200px; }
.copy { font-size: 20.500px; margin-top: 12px; }

/* corner */
.corner { position: absolute; left: 2400px; top: 4622px; width: 2100px; height: 801px; z-index: 4; }
.swoosh { fill: #f9f9f9; filter: drop-shadow(-8px -12px 26px rgba(0,0,0,.45)); }
.logo { position: absolute; left: 4060px; top: 5050px; width: 440px; height: 372px; z-index: 5; }
.logo .p { fill: #463892; }
.logo .w { fill: #f9f9f9; }
.logo .l { fill: #8079bd; }
.logo .c { fill: #00b4ee; }
```
